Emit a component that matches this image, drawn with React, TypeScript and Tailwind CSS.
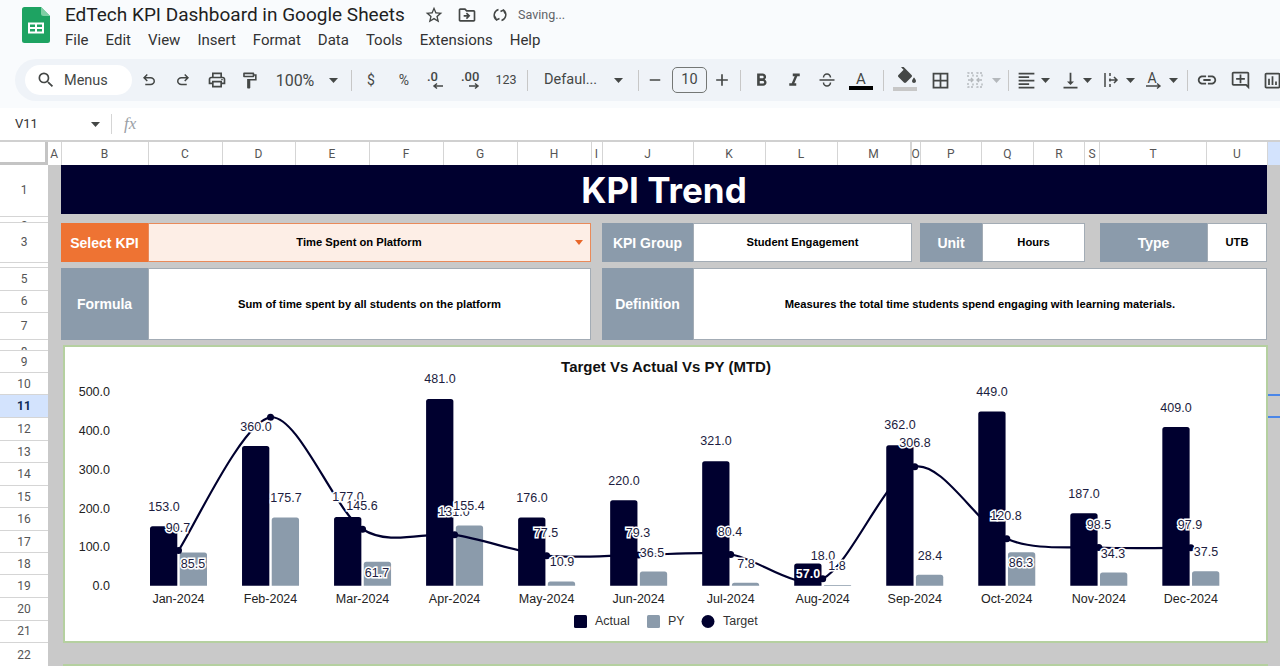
import React from "react";
import {
  MdSearch, MdOutlinePrint, MdOutlineFormatPaint, MdStarBorder,
  MdOutlineDriveFileMove, MdFormatBold, MdFormatItalic,
  MdOutlineBorderAll, MdFormatAlignLeft, MdVerticalAlignBottom, MdLink,
  MdOutlineAddComment, MdOutlineInsertChart, MdAdd, MdRemove,
} from "react-icons/md";

const NAVY = "#00002f";
const SLATE = "#8b9bab";
const Y0 = 585.7;
const K = 0.388;
const cx = (i: number) => 178.5 + 92.03 * i;
const yv = (v: number) => Y0 - K * v;

const months = ["Jan", "Feb", "Mar", "Apr", "May", "Jun", "Jul", "Aug", "Sep", "Oct", "Nov", "Dec"];
const actual = [153, 360, 177, 481, 176, 220, 321, 57, 362, 449, 187, 409];
const py = [85.5, 175.7, 61.7, 155.4, 10.9, 36.5, 7.8, 1.8, 28.4, 86.3, 34.3, 37.5];
const target = [90.7, 434, 145.6, 131, 77.5, 79.3, 80.4, 18, 306.8, 120.8, 98.5, 97.9];

const labels: [string, number, number][] = [
  ["153.0", 164, 507], ["360.0", 256, 427], ["177.0", 348, 497], ["481.0", 440, 379],
  ["176.0", 532, 498], ["220.0", 624, 481], ["321.0", 716, 441], ["18.0", 823, 556],
  ["362.0", 900, 425], ["449.0", 992, 392], ["187.0", 1084, 494], ["409.0", 1176, 408],
  ["90.7", 178, 528], ["145.6", 362, 506], ["131.0", 454, 512], ["77.5", 546, 533],
  ["79.3", 638, 533], ["80.4", 730, 532], ["306.8", 915, 443], ["120.8", 1006, 516],
  ["98.5", 1099, 525], ["97.9", 1190, 525],
  ["85.5", 193, 564], ["175.7", 286, 498], ["61.7", 377, 573], ["155.4", 469, 506],
  ["10.9", 562, 562], ["36.5", 652, 553], ["7.8", 746, 564], ["1.8", 837, 566],
  ["28.4", 930, 556], ["86.3", 1021, 563], ["34.3", 1113, 554], ["37.5", 1206, 552],
];

function curve(): string {
  const p = target.map((v, i) => [cx(i), yv(v)]);
  let d = `M${p[0][0]} ${p[0][1]}`;
  for (let i = 0; i < p.length - 1; i++) {
    const a = p[Math.max(i - 1, 0)], b = p[i], c = p[i + 1], e = p[Math.min(i + 2, p.length - 1)];
    const t = 0.15;
    d += ` C${b[0] + (c[0] - a[0]) * t} ${b[1] + (c[1] - a[1]) * t} ${c[0] - (e[0] - b[0]) * t} ${c[1] - (e[1] - b[1]) * t} ${c[0]} ${c[1]}`;
  }
  return d;
}

function bar(x: number, v: number): string {
  const w = 27.3, y = yv(v), r = Math.min(2.5, K * v);
  return `M${x} ${Y0}V${y + r}Q${x} ${y} ${x + r} ${y}H${x + w - r}Q${x + w} ${y} ${x + w} ${y + r}V${Y0}Z`;
}

function Chart() {
  return (
    <svg viewBox="65 347 1201 294" className="block w-full h-full font-['Liberation_Sans',Arial,sans-serif]">
      <text x={666} y={366.5} textAnchor="middle" dominantBaseline="central" className="fill-[#111] text-[15px] font-bold">Target Vs Actual Vs PY (MTD)</text>
      {[500, 400, 300, 200, 100, 0].map((v) => (
        <text key={v} x={110} y={yv(v) + 0.5} textAnchor="end" dominantBaseline="central" className="fill-[#222] text-[12.5px]">{v.toFixed(1)}</text>
      ))}
      {py.map((v, i) => <path key={i} d={bar(cx(i) + 1.2, v)} fill={SLATE} />)}
      <path d={curve()} fill="none" stroke={NAVY} strokeWidth={2.2} />
      {actual.map((v, i) => <path key={i} d={bar(cx(i) - 28.5, v)} fill={NAVY} />)}
      {target.map((v, i) => <circle key={i} cx={cx(i)} cy={yv(v)} r={3.5} fill={NAVY} />)}
      {labels.map(([t, x, y]) => (
        <text key={t} x={x} y={y} textAnchor="middle" dominantBaseline="central" className="fill-[#1c1c40] stroke-white stroke-[3px] [paint-order:stroke] text-[12.5px]">{t}</text>
      ))}
      <text x={808} y={574} textAnchor="middle" dominantBaseline="central" className="fill-white text-[12.5px] font-bold">57.0</text>
      {months.map((m, i) => (
        <text key={m} x={cx(i)} y={598.7} textAnchor="middle" dominantBaseline="central" className="fill-[#222] text-[12.5px]">{m}-2024</text>
      ))}
      <rect x={574} y={615} width={13} height={13} rx={1.5} fill={NAVY} />
      <text x={595} y={621} dominantBaseline="central" className="fill-[#333] text-[12.5px]">Actual</text>
      <rect x={647} y={615} width={13} height={13} rx={1.5} fill={SLATE} />
      <text x={668} y={621} dominantBaseline="central" className="fill-[#333] text-[12.5px]">PY</text>
      <circle cx={708} cy={621.5} r={6.5} fill={NAVY} />
      <text x={723} y={621} dominantBaseline="central" className="fill-[#333] text-[12.5px]">Target</text>
    </svg>
  );
}

function Caret({ className = "" }: { className?: string }) {
  return (
    <span className={`flex items-center justify-center shrink-0 ${className}`}>
      <svg width="9" height="5" viewBox="0 0 9 5" className="shrink-0"><path d="M0 0h9L4.5 5z" fill="#444746" /></svg>
    </span>
  );
}

function Slot({ w, children }: { w: string; children: React.ReactNode }) {
  return <span className={`flex items-center justify-center shrink-0 h-full text-[#444746] ${w}`}>{children}</span>;
}

function Sep({ className }: { className: string }) {
  return <span className={`shrink-0 w-px h-[21px] bg-[#c7c7c7] ${className}`} />;
}

function UndoIcon({ className = "" }: { className?: string }) {
  return (
    <svg width="18" height="18" viewBox="0 -960 960 960" fill="#444746" className={className}>
      <path d="M280-200v-80h284q63 0 109.500-40T720-420q0-60-46.500-100T564-560H312l104 104-56 56-200-200 200-200 56 56-104 104h252q97 0 166.500 63T800-420q0 94-69.500 157T564-200H280Z" />
    </svg>
  );
}

function Toolbar() {
  return (
    <div className="ml-[15px] h-[42px] bg-[#eff3f8] rounded-l-[21px] flex items-center pl-[10px] overflow-hidden font-['Roboto',sans-serif] text-[#444746]">
      <div className="shrink-0 w-[107px] h-[30px] bg-white rounded-full flex items-center pl-[11px] text-[14.5px]">
        <MdSearch size={20} />
        <span className="ml-[8px] pt-px">Menus</span>
      </div>
      <Slot w="w-[34px]"><UndoIcon /></Slot>
      <Slot w="w-[34px]"><UndoIcon className="-scale-x-100" /></Slot>
      <Slot w="w-[33px]"><MdOutlinePrint size={20} /></Slot>
      <Slot w="w-[32px]"><MdOutlineFormatPaint size={19} /></Slot>
      <Slot w="w-[60px]"><span className="text-[16px] pt-px">100%</span></Slot>
      <Caret className="w-[16px]" />
      <Sep className="ml-[10px] mr-[2.5px]" />
      <Slot w="w-[33px]"><span className="text-[14px]">$</span></Slot>
      <Slot w="w-[33px]"><span className="text-[14px]">%</span></Slot>
      <Slot w="w-[31px]">
        <svg width="20" height="22" viewBox="0 0 20 22"><text x="1" y="12" fontSize="13" fontWeight="500" fill="#444746">.0</text><path d="M17 17H8m3-2.500L8 17l3 2.500" fill="none" stroke="#444746" strokeWidth="1.5" /></svg>
      </Slot>
      <Slot w="w-[41px]">
        <svg width="22" height="22" viewBox="0 0 22 22"><text x="0" y="12" fontSize="13" fontWeight="500" fill="#444746">.00</text><path d="M8 17h9m-3-2.500l3 2.500-3 2.500" fill="none" stroke="#444746" strokeWidth="1.5" /></svg>
      </Slot>
      <Slot w="w-[27px]"><span className="text-[12.5px]">123</span></Slot>
      <Sep className="ml-[7.5px]" />
      <span className="shrink-0 ml-[16px] w-[58px] text-[14.5px] whitespace-nowrap">Defaul...</span>
      <Caret className="w-[16px] ml-[8px]" />
      <Sep className="ml-[12px]" />
      <Slot w="w-[32px]"><MdRemove size={18} /></Slot>
      <span className="shrink-0 ml-px w-[35px] h-[26px] border border-[#747775] rounded-[5px] flex items-center justify-center text-[14.5px]">10</span>
      <Slot w="w-[30px]"><MdAdd size={20} /></Slot>
      <Sep className="ml-[3px]" />
      <Slot w="w-[40px]"><MdFormatBold size={21} /></Slot>
      <Slot w="w-[26px]"><MdFormatItalic size={21} /></Slot>
      <Slot w="w-[40px]">
        <svg width="18" height="18" viewBox="0 0 18 18" fill="none" stroke="#444746" strokeWidth="1.5"><path d="M5.500 6.500a3.500 3.500 0 0 1 7 0M1.500 9h15M5.500 11.500a3.500 3.500 0 0 0 7 0" /></svg>
      </Slot>
      <Slot w="w-[28px]">
        <svg width="24" height="24" viewBox="0 0 24 24"><text x="12" y="16" textAnchor="middle" fontSize="15" fill="#444746">A</text><rect x="0" y="18" width="24" height="4" fill="#000" /></svg>
      </Slot>
      <Sep className="ml-[8px]" />
      <Slot w="w-[36px] ml-[3px]">
        <svg width="26" height="26" viewBox="0 0 26 26">
          <path transform="translate(3 -1)" d="M16.560 8.940L7.620 0 6.210 1.410l2.380 2.380-5.150 5.150c-.59.59-.59 1.540 0 2.120l5.500 5.500c.29.29.68.44 1.060.44s.77-.15 1.060-.44l5.500-5.500c.59-.58.59-1.530 0-2.120zM19 11.500s-2 2.170-2 3.500c0 1.100.9 2 2 2s2-.9 2-2c0-1.330-2-3.500-2-3.500z" fill="#444746" />
          <rect x="1" y="20" width="24" height="4" fill="#c7c7c7" />
        </svg>
      </Slot>
      <Slot w="w-[34px]"><MdOutlineBorderAll size={21} /></Slot>
      <Slot w="w-[36px]">
        <svg width="18" height="18" viewBox="0 0 18 18" fill="none" stroke="#b4b8bc" strokeWidth="1.4"><path d="M2 6V2h5v4M11 6V2h5v4M2 12v4h5v-4M11 12v4h5v-4" strokeDasharray="2 1.5" /><path d="M2 9h5m-2-2l2 2-2 2M16 9h-5m2-2l-2 2 2 2" /></svg>
      </Slot>
      <span className="shrink-0 w-[6px] flex justify-center"><svg width="9" height="5" viewBox="0 0 9 5" className="shrink-0"><path d="M0 0h9L4.500 5z" fill="#b4b8bc" /></svg></span>
      <Sep className="ml-[9px]" />
      <Slot w="w-[32px] ml-px"><MdFormatAlignLeft size={21} /></Slot>
      <Caret className="w-[6px]" />
      <Slot w="w-[28px] ml-[8px]"><MdVerticalAlignBottom size={21} /></Slot>
      <Caret className="w-[6px]" />
      <Slot w="w-[28px] ml-[7px]">
        <svg width="18" height="18" viewBox="0 0 18 18" fill="none" stroke="#444746" strokeWidth="1.5"><path d="M3 2v14M8 2v3M8 7.500v3M8 13v3M7 9h8m-3-3l3 3-3 3" /></svg>
      </Slot>
      <Caret className="w-[6px] ml-[2px]" />
      <Slot w="w-[28px] ml-[7px]">
        <svg width="20" height="20" viewBox="0 0 20 20"><text x="8" y="13" textAnchor="middle" fontSize="14" fill="#444746">A</text><path d="M2 16h14m-3-2.500l3 2.500-3 2.500" fill="none" stroke="#444746" strokeWidth="1.4" /></svg>
      </Slot>
      <Caret className="w-[6px] ml-[2px]" />
      <Sep className="ml-[11px]" />
      <Slot w="w-[38px]"><MdLink size={22} /></Slot>
      <Slot w="w-[28px]"><MdOutlineAddComment size={21} /></Slot>
      <Slot w="w-[36px]"><MdOutlineInsertChart size={21} /></Slot>
    </div>
  );
}

const cols: [string, string][] = [
  ["A", "w-[13.5px]"], ["B", "w-[87px]"], ["C", "w-[74px]"], ["D", "w-[73px]"], ["E", "w-[74px]"], ["F", "w-[74px]"],
  ["G", "w-[74px]"], ["H", "w-[74px]"], ["I", "w-[11px]"], ["J", "w-[91px]"], ["K", "w-[72px]"], ["L", "w-[72px]"],
  ["M", "w-[73px]"], ["", "w-[1px]"], ["O", "w-[9px]"], ["P", "w-[61.5px]"], ["Q", "w-[52px]"], ["R", "w-[51px]"],
  ["S", "w-[15px]"], ["T", "w-[107px]"], ["U", "w-[61px]"],
];

const rows: [string, string, string][] = [
  ["1", "h-[51.5px]", "items-center"], ["2", "h-[6.5px]", "items-start"], ["3", "h-[39.5px]", "items-center"], ["4", "h-[5.5px]", "items-start"],
  ["5", "h-[22.5px]", "items-center"], ["6", "h-[22.5px]", "items-center"], ["7", "h-[27px]", "items-center"], ["8", "h-[11px]", "items-start pt-[3px]"],
  ["9", "h-[22px]", "items-center"], ["10", "h-[22px]", "items-center"], ["11", "h-[23px]", "items-center"], ["12", "h-[23px]", "items-center"],
  ["13", "h-[22px]", "items-center"], ["14", "h-[23px]", "items-center"], ["15", "h-[22px]", "items-center"], ["16", "h-[23px]", "items-center"],
  ["17", "h-[22px]", "items-center"], ["18", "h-[22px]", "items-center"], ["19", "h-[23px]", "items-center"], ["20", "h-[22.5px]", "items-center"],
  ["21", "h-[22.5px]", "items-center"], ["22", "h-[24px]", "items-center"],
];

const labelCls = "flex items-center justify-center shrink-0 h-full text-white font-bold text-[14px] pt-px bg-[#8b9bab]";
const valueCls = "flex items-center justify-center shrink-0 h-full bg-white text-black font-bold text-[11.2px] border border-[#a3acb5]";

export default function App() {
  return (
    <div className="relative w-[1280px] h-[666px] overflow-hidden bg-white font-['Liberation_Sans',Arial,sans-serif]">
      {/* Title + menus */}
      <div className="h-[59px] bg-[#f9fbfd] flex items-start font-['Roboto',sans-serif]">
        <svg width="28" height="36" viewBox="0 0 28 36" className="ml-[22px] mt-[7px] shrink-0">
          <path d="M2.500 0H19l9 9v24.500a2.500 2.500 0 0 1-2.500 2.500h-23A2.500 2.500 0 0 1 0 33.500v-31A2.500 2.500 0 0 1 2.500 0z" fill="#1ea362" />
          <path d="M19 0l9 9h-6.500A2.500 2.500 0 0 1 19 6.500z" fill="#7fcfa4" />
          <path d="M6 15.500h16v11H6z M8 17.500v2.500h5v-2.500z M15 17.500v2.500h5v-2.500z M8 22v2.500h5V22z M15 22v2.500h5V22z" fill="#fff" fillRule="evenodd" />
        </svg>
        <div className="ml-[15px] flex flex-col">
          <div className="flex items-center h-[26px] mt-[2px]">
            <span className="text-[19px] text-[#1f1f1f] whitespace-nowrap w-[359px]">EdTech KPI Dashboard in Google Sheets</span>
            <MdStarBorder size={20} className="text-[#444746]" />
            <MdOutlineDriveFileMove size={20} className="text-[#444746] ml-[13px]" />
            <svg width="16" height="16" viewBox="0 0 16 16" fill="none" stroke="#444746" strokeWidth="1.5" className="ml-[15px]"><path d="M6.500 2.500A6 6 0 0 0 4.500 13M3 9.500l1.500 3.500 3-1.500M9.500 13.500A6 6 0 0 0 11.500 3M13 6.500L11.500 3l-3 1.500" /></svg>
            <span className="ml-[10px] text-[12.5px] text-[#5f6368]">Saving...</span>
          </div>
          <div className="flex items-center gap-[17px] text-[15px] text-[#333] h-[22px] mt-px">
            <span>File</span><span>Edit</span><span>View</span><span>Insert</span><span>Format</span>
            <span>Data</span><span>Tools</span><span>Extensions</span><span>Help</span>
          </div>
        </div>
      </div>
      <div className="bg-[#f9fbfd]">
        <Toolbar />
        <div className="h-[7px]" />
      </div>
      {/* Formula bar */}
      <div className="h-[32px] bg-white flex items-center font-['Roboto',sans-serif] text-[#333]">
        <span className="ml-[15px] w-[76px] text-[13px]">V11</span>
        <Caret className="w-[9px]" />
        <span className="ml-[11px] w-px h-[20px] bg-[#d5d5d5]" />
        <span className="ml-[12px] text-[17px] italic text-[#9aa0a6] font-['Liberation_Serif',serif]">fx</span>
      </div>
      {/* Column headers */}
      <div className="h-[25px] flex bg-white border-t-2 border-[#d0d0d0] font-['Roboto',sans-serif] text-[12px] text-[#555]">
        <div className="w-[48px] shrink-0 border-b-[3px] border-r-[3px] border-[#c4c4c4]" />
        {cols.map(([c, w]) => (
          <div key={c + w} className={`${w} shrink-0 flex items-center justify-center border-r border-[#d5d5d5]`}>{c}</div>
        ))}
        <div className="flex-1 bg-[#d3e3fd]" />
      </div>
      {/* Sheet */}
      <div className="flex h-[501px]">
        <div className="w-[48px] shrink-0 flex flex-col bg-white font-['Roboto',sans-serif] text-[12px] text-[#555]">
          {rows.map(([r, h, a]) => (
            <div key={r} className={`${h} ${a} shrink-0 overflow-hidden flex justify-center border-b border-[#d5d5d5] ${r === "11" ? "bg-[#d3e3fd] font-bold text-[#0b2a55]" : ""}`}>{r}</div>
          ))}
        </div>
        <div className="flex-1 min-w-0 bg-[#c9c9c9] pl-[13px] flex flex-col">
          <div className="w-[1206px] h-[49px] shrink-0 flex items-center justify-center text-white bg-[#00002f] text-[35px] font-bold font-['Inter',sans-serif] pt-[1px]">KPI Trend</div>
          <div className="w-[1206px] h-[39px] shrink-0 mt-[9px] flex">
            <div className={`${labelCls} w-[87px] bg-[#ee7333]`}>Select KPI</div>
            <div className="relative shrink-0 w-[443px] h-full flex items-center justify-center bg-[#fdeee6] border border-[#e98a5a] pr-[21px] text-black font-bold text-[11.2px]">
              Time Spent on Platform
              <svg width="8" height="5" viewBox="0 0 8 5" className="absolute right-[7px] top-[16px]"><path d="M0 0h8L4 5z" fill="#e8672a" /></svg>
            </div>
            <div className={`${labelCls} w-[91px] ml-[11px]`}>KPI Group</div>
            <div className={`${valueCls} w-[219px]`}>Student Engagement</div>
            <div className={`${labelCls} w-[62px] ml-[8px]`}>Unit</div>
            <div className={`${valueCls} w-[103px]`}>Hours</div>
            <div className={`${labelCls} w-[107px] ml-[15px]`}>Type</div>
            <div className={`${valueCls} w-[60px]`}>UTB</div>
          </div>
          <div className="w-[1206px] h-[72px] shrink-0 mt-[6px] flex">
            <div className={`${labelCls} w-[87px]`}>Formula</div>
            <div className={`${valueCls} w-[443px]`}>Sum of time spent by all students on the platform</div>
            <div className={`${labelCls} w-[91px] ml-[11px]`}>Definition</div>
            <div className={`${valueCls} w-[574px]`}>Measures the total time students spend engaging with learning materials.</div>
          </div>
          <div className="ml-[2px] w-[1205px] h-[298px] shrink-0 mt-[5px] bg-white border-2 border-[#b5d0a0]">
            <Chart />
          </div>
          <div className="ml-[2px] w-[1205px] flex-1 mt-[21px] bg-white border-t-2 border-[#b5d0a0]" />
        </div>
      </div>
      {/* Selection edges in the clipped column V */}
      <div className="absolute left-[1268px] right-0 top-[394px] h-[2px] bg-[#4a86e8]" />
      <div className="absolute left-[1268px] right-0 top-[416px] h-[2px] bg-[#4a86e8]" />
    </div>
  );
}
